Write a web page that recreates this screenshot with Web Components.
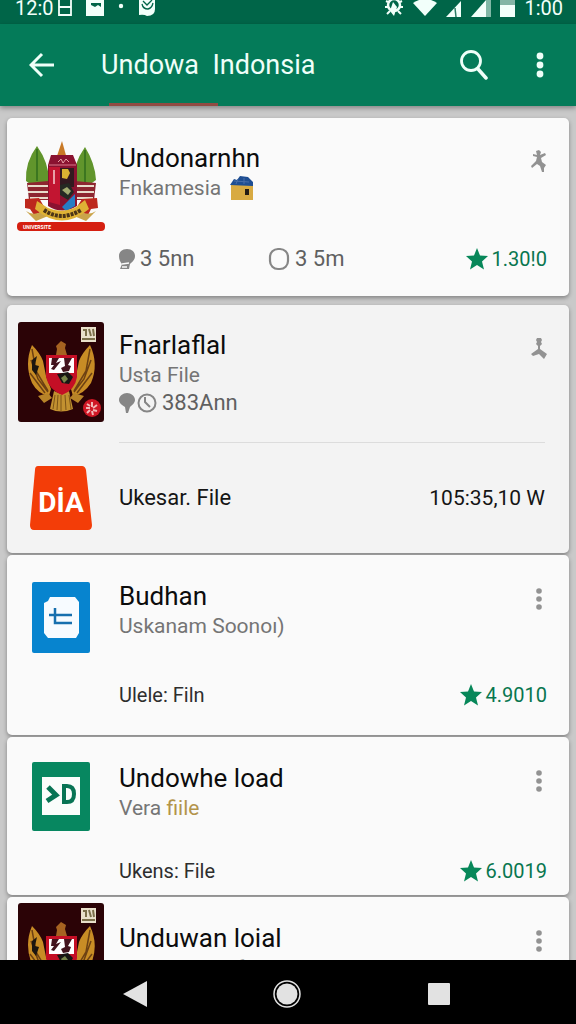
<!DOCTYPE html>
<html lang="id">
<head>
<meta charset="utf-8">
<meta name="viewport" content="width=device-width, initial-scale=1">
<title>Undowa Indonsia</title>
<style>
  body {
    margin: 0;
    height: 100vh;
    display: flex;
    flex-direction: column;
    overflow: hidden;
    font-family: Roboto, "Noto Sans CJK JP", sans-serif;
    background: #c9c9c9;
  }
</style>
</head>
<body>
<status-bar></status-bar>
<app-bar>Undowa&nbsp; Indonsia</app-bar>

<card-list>
  <file-card style="--media-top: 17px; --footer-gap: 43px; --end: 23px; margin-bottom: 7px">
    <app-logo slot="media" name="castle"></app-logo>
    <span slot="title">Undonarnhn</span>
    <span slot="subtitle">Fnkamesia</span>
    <app-icon slot="subtitle" name="house"></app-icon>
    <app-icon slot="action" name="runner"></app-icon>
    <stat-item slot="footer" icon="bulb">3 5nn</stat-item>
    <stat-item slot="footer" icon="ring">3 5m</stat-item>
    <rating-score slot="footer">1.30!0</rating-score>
  </file-card>

  <file-card style="--card-bg: #f3f3f3; --media-top: 17px; --footer-gap: 0px; --end: 0px">
    <app-logo slot="media" name="eagle"></app-logo>
    <span slot="title">Fnarlaflal</span>
    <span slot="subtitle">Usta File</span>
    <app-icon slot="action" name="tripod"></app-icon>
    <stat-item slot="footer" icon="pin" second="clock">383Ann</stat-item>
    <file-row slot="extra">
      <app-logo slot="media" name="dia"></app-logo>
      Ukesar. File
      <span slot="value">105:35,10 W</span>
    </file-row>
  </file-card>

  <file-card style="--top: 25px; --media-top: 27px; --footer-gap: 41px; --end: 26px">
    <app-logo slot="media" name="doc"></app-logo>
    <span slot="title">Budhan</span>
    <span slot="subtitle">Uskanam Soonoı)</span>
    <app-icon slot="action" name="dots"></app-icon>
    <span slot="footer">Ulele: Filn</span>
    <rating-score slot="footer">4.9010</rating-score>
  </file-card>

  <file-card style="--top: 25px; --media-top: 25px; --footer-gap: 35px; --end: 10px">
    <app-logo slot="media" name="code"></app-logo>
    <span slot="title">Undowhe load</span>
    <span slot="subtitle">Vera <span style="color: #b3944a">fiile</span></span>
    <app-icon slot="action" name="dots"></app-icon>
    <span slot="footer">Ukens: File</span>
    <rating-score slot="footer">6.0019</rating-score>
  </file-card>

  <file-card style="--top: 25px; --media-top: 6px; --footer-gap: 41px; --end: 26px">
    <app-logo slot="media" name="eagle"></app-logo>
    <span slot="title">Unduwan loial</span>
    <span slot="subtitle">Ukanduom af</span>
    <app-icon slot="action" name="dots"></app-icon>
  </file-card>
</card-list>

<nav-bar></nav-bar>

<script>
const ICONS = {
  back: [26, 26, '<path d="M25 13H3M13 2 2 13l11 11" fill="none" stroke="currentColor" stroke-width="3"/>'],
  search: [28, 30, '<circle cx="11" cy="11" r="9.500" fill="none" stroke="currentColor" stroke-width="2.800"/><path d="m18 19 8 9" stroke="currentColor" stroke-width="3.500" stroke-linecap="round"/>'],
  more: [8, 26, '<circle cx="4" cy="4" r="3.400"/><circle cx="4" cy="13" r="3.400"/><circle cx="4" cy="22" r="3.400"/>'],
  dots: [16, 22, '<circle cx="8" cy="3" r="2.800"/><circle cx="8" cy="11" r="2.800"/><circle cx="8" cy="19" r="2.800"/>'],
  runner: [16, 24, '<path d="m5 2 3-1 2 2-1 3 5-2 1 2-5 3 1 4 4 3-2 3 0 4h-2l-2-6-3-2-5 4-1-2 5-5 1-4-4-1V5l4 1z"/>'],
  tripod: [16, 22, '<path d="M6 1h4l1 2-1 2 1 2-2 2v3l7 5-3 5-5-5-6 2-2-2 7-5V9L5 7l1-2-1-2z"/>'],
  house: [24, 28, '<path d="M1 11h22v15H1z" fill="#d8aa42"/><path d="m0 11 4-6 3 1 3-4 8 1 5 5v4z" fill="#1e4e93"/><path d="m4 7 15 1M8 5l-2 5m8-6v6" stroke="#476da9"/><path d="M15 15h4v6h-4z" fill="#241c14"/>'],
  bulb: [16, 22, '<path d="M8 1c5 0 8 3 8 7s-3 6-5 8l-1 5H1l2-5C1 14 0 11 0 8c0-4 3-7 8-7z"/><path d="m3 16 7-1M3 19h5" stroke="#fafafa" stroke-width="1.500"/>'],
  ring: [22, 24, '<rect x="2" y="2" width="18" height="20" rx="8" fill="none" stroke="currentColor" stroke-width="2.200"/>'],
  pin: [16, 22, '<path d="M8 1c4 0 8 3 8 7 0 3-3 5-5 7l-2 6H7l-1-6C3 13 0 11 0 8c0-4 4-7 8-7z"/>'],
  clock: [20, 22, '<circle cx="10" cy="11" r="8.500" fill="none" stroke="currentColor" stroke-width="2"/><path d="M8 5v5l5 5" fill="none" stroke="currentColor" stroke-width="2"/>'],
  star: [22, 22, '<path d="m11 0 3 7.500 8 .5-6 5.500 2 8-7-4.500-7 4.500 2-8L0 8l8-.5z"/>'],
  grid: [14, 16, '<path d="M1 0v15h12V0M1 7h12" fill="none" stroke="currentColor" stroke-width="1.800"/>'],
  picture: [18, 16, '<path d="M0 0h18v16H0z"/><path d="M5 3h10v4l-3-2-3 2-4-2z" fill="#006548"/>'],
  dot: [6, 16, '<circle cx="3" cy="6" r="2.200"/>'],
  badge: [18, 16, '<path d="M1 0h16v9q0 7-8 7-3-2-8-1z"/><path d="m5 1 4 4 5-5M4 4q1 5 6 5 4-1 5-6" fill="none" stroke="#006548" stroke-width="1.300"/>'],
  gear: [20, 18, '<circle cx="10" cy="5" r="6" fill="none" stroke="currentColor" stroke-width="2.500"/><path d="m2 1 2 1M1 7h3m12-5 2-1m-2 6h3M3 14l3-3m8 0 3 3" stroke="currentColor" stroke-width="2"/><path d="m9 2 4 5-3 9-4-5z"/>'],
  wifi: [24, 16, '<path d="M0 3Q12-5 24 3L12 16z"/>'],
  signal: [16, 18, '<path d="M0 17 15 1v16z"/><path d="m9 8 1 9" stroke="#2a7c64" stroke-width="1.500"/>'],
  signal2: [20, 18, '<path d="M15 0h5v17h-5z" fill="#80b8a6"/><path d="M0 17 15 0v17z"/>'],
  battery: [15, 18, '<path d="M0 0h15v5H0z" fill="#83b5a5"/><path d="M0 5h15v12H0z"/>'],
  navBack: [26, 28, '<path d="M25 1v26L1 14z"/>'],
  navHome: [28, 28, '<circle cx="14" cy="14" r="13" fill="none" stroke="currentColor" stroke-width="1.500"/><circle cx="14" cy="14" r="10.500"/>'],
  navRecent: [22, 22, '<rect width="22" height="22" rx="1"/>']
};

const LOGOS = {
  castle: [90, 98, `
    <path d="M21 11q-12 16-11 35l11 8 12-8Q33 28 21 11zM69 12Q57 29 58 46l11 7 11-8Q79 28 69 12z" fill="#61952c"/>
    <path d="M21 14v32M69 15v32" stroke="#3c7620" stroke-width="2"/>
    <path d="m46 6 5 18H40z" fill="#c97a27"/>
    <path d="m11 48 21-2h27l21 2-2 17H13z" fill="#8e2630"/>
    <path d="M12 51h66M12 57h66M14 63h63" stroke="#e8dccb" stroke-width="2"/>
    <path d="M35 20h22l4 10v41q-15 9-29 0V30z" fill="#8a1230"/>
    <path d="M33 30h27" stroke="#d9798a" stroke-width="1"/><path d="M33 32h11v38l-11-3z" fill="#c21531"/>
    <path d="M38 35v14" stroke="#e8a0a8" stroke-width="2"/>
    <path d="M44 33h14v19H44z" fill="#321920"/><path d="M46 34h6l2 4-3 6-5-1z" fill="#d9b232"/>
    <path d="m44 50 9-2 5 9-6 8-8-5z" fill="#252923"/><path d="m46 55 5-3 4 4-3 4z" fill="#a1aa70"/>
    <path d="m46 72 13-13v12l-9 5z" fill="#267dc5"/><path d="m42 27 3-3 2 4 3-4 3 3" stroke="#e6a1a5" fill="none"/>
    <path d="m9 64 14-1 7 12-12 5-4-6-5-1zM81 63l-15 1-7 11 13 5 3-6 7-1z" fill="#bd281d"/>
    <path d="M10 76q7 5 15 1l7 4-12 5zM80 76q-7 5-15 1l-7 4 12 5z" fill="#caa44a"/>
    <path d="m21 66 11 7q14 6 28-1l9-7 4 9q-27 23-54 0z" fill="#dfb235"/>
    <path d="M28 75q17 12 37 0" fill="none" stroke="#4b3517" stroke-width="4" stroke-dasharray="3 1"/>
    <rect x="1" y="87" width="88" height="9" rx="4" fill="#d51f10"/>
    <text x="7" y="94" font-size="5" font-weight="700" fill="#fff">UNIVERSITE</text>`],
  eagle: [86, 100, `
    <rect width="86" height="100" rx="3" fill="#2b0306"/>
    <path d="M14 23q-8 19 0 38 6 11 17 13l2-7-5-13-3-15q-3-8-11-16zM72 23q9 19 1 38-7 11-18 13l-2-7 5-13 3-15q3-8 11-16z" fill="#c88c25"/>
    <path d="m14 27 4 22 12 20M13 38l7 19 10 13M12 51l15 20M72 27l-4 22-12 20m17-31-7 19-10 13m18-19L59 71" fill="none" stroke="#6d4113" stroke-width="1.500"/>
    <path d="m14 38 5-4-2 9 4 1-3 9-4-5z" fill="#1c1610"/>
    <path d="m38 24 5-5 5 3-1 4 2 7H38l1-6z" fill="#a66321"/>
    <path d="m36 69 7 3 8-3 4 18q-12 5-23 0z" fill="#c29130"/>
    <path d="m37 73-2 14m5-14-1 15m4-15v16m4-16 1 15m3-15 2 14" stroke="#7c5417"/>
    <path d="m20 74 10-3 4 5-8 5zM66 74l-10-3-4 5 8 5z" fill="#b78328"/>
    <path d="M28 33h31v22q-2 13-15 18-13-5-16-18z" fill="#c40f25"/>
    <path d="M31 36h25v15H31z" fill="#fff"/>
    <path d="M34 36h7l-3 5 5-2-7 9-3-1 3-4h-3zm12 0h8l-4 7 3 1-2 5-6 1-2-4 4-2z" fill="#43131d"/>
    <path d="m39 52 11-2 5 5-4 7-7-1z" fill="#171614"/><path d="m43 56 4-3 3 4-4 4z" fill="#77854a"/>
    <path d="M63 5h15v15H63z" fill="#e9e0ca"/><path d="M65 8h3v6m3-7 2 7m2-7 1 7M64 17h13" fill="none" stroke="#7c704b" stroke-width="2"/>
    <circle cx="74" cy="86" r="9" fill="#d01826"/>
    <path d="m69 82 3 2m2-4v5m5-2-4 3m4 3-4-1m0 5-1-4m-5 2 3-3m-4-2h4" fill="none" stroke="#f2b8b7" stroke-width="2"/>`],
  dia: [62, 64, `
    <path d="M8 0h44q3 0 4 4l6 55q0 5-4 5H4q-4 0-4-5L5 4q0-4 3-4z" fill="#f33d08"/>
    <text x="31" y="46" text-anchor="middle" font-size="28" font-weight="700" fill="#fff">DİA</text>`],
  doc: [58, 71, `
    <rect width="58" height="71" rx="2" fill="#0784cf"/>
    <path d="M18 15h25l4 5v31l-3 5H16l-4-5V21l4-2z" fill="#f7fbff"/>
    <path d="M17 33h23M23 26v15h17" fill="none" stroke="#176fae" stroke-width="2.500"/>`],
  code: [58, 69, `
    <rect width="58" height="69" rx="2" fill="#078760"/>
    <path d="M10 15h38v38H10z" fill="#fafdfb"/>
    <path d="m16 25 8 8-9 6" fill="none" stroke="#087454" stroke-width="5"/>
    <path d="M32 24h3q7 0 7 8t-7 8h-3z" fill="none" stroke="#087454" stroke-width="4"/>`]
};

const drawing = (set, name) => {
  const [w, h, body] = set[name];
  return `<svg width="${w}" height="${h}" viewBox="0 0 ${w} ${h}" fill="currentColor" aria-hidden="true">${body}</svg>`;
};

class AppIcon extends HTMLElement {
  connectedCallback() {
    this.attachShadow({ mode: 'open' });
    this.shadowRoot.innerHTML = `
      <style>
        :host { display: inline-flex; flex: none; }
        svg { display: block; }
      </style>
      ${drawing(ICONS, this.getAttribute('name'))}
    `;
  }
}

class AppLogo extends HTMLElement {
  connectedCallback() {
    this.attachShadow({ mode: 'open' });
    this.shadowRoot.innerHTML = `
      <style>
        :host { display: block; flex: none; }
        svg { display: block; }
      </style>
      ${drawing(LOGOS, this.getAttribute('name'))}
    `;
  }
}

class StatusBar extends HTMLElement {
  connectedCallback() {
    this.attachShadow({ mode: 'open' });
    this.shadowRoot.innerHTML = `
      <style>
        :host {
          display: flex;
          flex: none;
          justify-content: space-between;
          height: 24px;
          padding: 0 13px 0 15px;
          box-sizing: border-box;
          background: #006548;
          color: #f2fffa;
          font-size: 20px;
          line-height: 16px;
        }
        div { display: flex; align-items: flex-start; }
        .left { gap: 14px; }
        .right { gap: 9px; }
        .time { display: flex; gap: 4px; }
      </style>
      <div class="left">
        <span class="time">12:0<app-icon name="grid"></app-icon></span>
        <app-icon name="picture"></app-icon>
        <app-icon name="dot"></app-icon>
        <app-icon name="badge"></app-icon>
      </div>
      <div class="right">
        <app-icon name="gear"></app-icon>
        <app-icon name="wifi"></app-icon>
        <app-icon name="signal"></app-icon>
        <app-icon name="signal2"></app-icon>
        <app-icon name="battery"></app-icon>
        <span>1:00</span>
      </div>
    `;
  }
}

class AppBar extends HTMLElement {
  connectedCallback() {
    this.attachShadow({ mode: 'open' });
    this.shadowRoot.innerHTML = `
      <style>
        :host {
          display: block;
          flex: none;
          position: relative;
          z-index: 1;
          background: #047b59;
          color: #effff9;
          box-shadow: 0 2px 5px rgba(0, 0, 0, 0.35);
        }
        .bar {
          display: flex;
          align-items: center;
          height: 79px;
          padding: 2px 32px 0 29px;
          box-sizing: border-box;
        }
        h1 {
          flex: 1;
          margin: 0 0 0 46px;
          font-size: 27px;
          line-height: 36px;
          font-weight: 400;
          white-space: nowrap;
        }
        button {
          display: flex;
          padding: 0;
          border: 0;
          background: none;
          color: inherit;
          cursor: pointer;
        }
        .search { margin-right: 48px; }
        .indicator {
          width: 109px;
          height: 3px;
          margin-left: 109px;
          background: #914b43;
        }
      </style>
      <div class="bar">
        <button aria-label="Back"><app-icon name="back"></app-icon></button>
        <h1><slot></slot></h1>
        <button class="search" aria-label="Search"><app-icon name="search"></app-icon></button>
        <button aria-label="More options"><app-icon name="more"></app-icon></button>
      </div>
      <div class="indicator"></div>
    `;
  }
}

class CardList extends HTMLElement {
  connectedCallback() {
    this.attachShadow({ mode: 'open' });
    this.shadowRoot.innerHTML = `
      <style>
        :host {
          display: flex;
          flex-direction: column;
          flex: 1;
          gap: 2px;
          min-height: 0;
          padding: 12px 7px 0;
          overflow: hidden;
          background: #c9c9c9;
        }
      </style>
      <slot></slot>
    `;
  }
}

class FileCard extends HTMLElement {
  connectedCallback() {
    this.attachShadow({ mode: 'open' });
    this.shadowRoot.innerHTML = `
      <style>
        :host {
          display: block;
          flex: none;
          border-radius: 5px;
          background: var(--card-bg, #fafafa);
          box-shadow: 0 2px 4px rgba(0, 0, 0, 0.35);
        }
        .main { display: flex; }
        .media {
          display: flex;
          flex: none;
          justify-content: center;
          width: 108px;
          height: 0;
          padding-top: var(--media-top);
        }
        .body {
          flex: 1;
          min-width: 0;
          padding: var(--top, 24px) 22px var(--end) 4px;
        }
        .head { display: flex; justify-content: space-between; }
        h2 {
          margin: 0;
          color: #0c0c0c;
          font-size: 26px;
          line-height: 32px;
          font-weight: 400;
        }
        .subtitle {
          display: flex;
          gap: 9px;
          color: #757575;
          font-size: 21px;
          line-height: 28px;
        }
        button {
          display: flex;
          align-items: center;
          height: 38px;
          padding: 0;
          border: 0;
          background: none;
          color: #929292;
          cursor: pointer;
        }
        .footer {
          display: flex;
          align-items: center;
          min-height: 28px;
          margin-top: var(--footer-gap);
          color: #2e2e2e;
          font-size: 20px;
          line-height: 28px;
        }
        ::slotted(rating-score) { margin-left: auto; }
        ::slotted(stat-item) { min-width: 149px; }
      </style>
      <div class="main">
        <div class="media"><slot name="media"></slot></div>
        <div class="body">
          <div class="head">
            <div>
              <h2><slot name="title"></slot></h2>
              <div class="subtitle"><slot name="subtitle"></slot></div>
            </div>
            <button aria-label="Options"><slot name="action"></slot></button>
          </div>
          <div class="footer"><slot name="footer"></slot></div>
        </div>
      </div>
      <slot name="extra"></slot>
    `;
  }
}

class FileRow extends HTMLElement {
  connectedCallback() {
    this.attachShadow({ mode: 'open' });
    this.shadowRoot.innerHTML = `
      <style>
        :host { display: flex; padding-top: 25px; }
        .media {
          display: flex;
          flex: none;
          align-items: center;
          justify-content: center;
          width: 108px;
        }
        .line {
          display: flex;
          flex: 1;
          align-items: center;
          justify-content: space-between;
          height: 110px;
          margin: 0 24px 0 4px;
          border-top: 1px solid #dcdcdc;
          color: #151515;
          font-size: 22px;
          line-height: 28px;
        }
        ::slotted([slot="value"]) { font-size: 21px; }
      </style>
      <div class="media"><slot name="media"></slot></div>
      <div class="line"><span><slot></slot></span><slot name="value"></slot></div>
    `;
  }
}

class StatItem extends HTMLElement {
  connectedCallback() {
    const second = this.getAttribute('second');
    this.attachShadow({ mode: 'open' });
    this.shadowRoot.innerHTML = `
      <style>
        :host { display: flex; align-items: center; gap: 5px; color: #606060; font-size: 22px; }
        app-icon { color: #868686; }
        .pair { display: flex; align-items: center; gap: 2px; }
      </style>
      <span class="pair">
        <app-icon name="${this.getAttribute('icon')}"></app-icon>
        ${second ? `<app-icon name="${second}"></app-icon>` : ''}
      </span>
      <span><slot></slot></span>
    `;
  }
}

class RatingScore extends HTMLElement {
  connectedCallback() {
    this.attachShadow({ mode: 'open' });
    this.shadowRoot.innerHTML = `
      <style>
        :host { display: flex; align-items: center; gap: 4px; color: #08764f; }
        app-icon { color: #078759; }
      </style>
      <app-icon name="star"></app-icon><span><slot></slot></span>
    `;
  }
}

class NavBar extends HTMLElement {
  connectedCallback() {
    this.attachShadow({ mode: 'open' });
    this.shadowRoot.innerHTML = `
      <style>
        :host {
          display: flex;
          flex: none;
          position: relative;
          z-index: 1;
          align-items: center;
          justify-content: center;
          height: 64px;
          padding: 3px 2px 0 0;
          box-sizing: border-box;
          background: #000;
        }
        button {
          display: flex;
          justify-content: center;
          width: 152px;
          padding: 0;
          border: 0;
          background: none;
          color: #e2e2e2;
          cursor: pointer;
        }
      </style>
      <button aria-label="Back"><app-icon name="navBack"></app-icon></button>
      <button aria-label="Home"><app-icon name="navHome"></app-icon></button>
      <button aria-label="Recent apps"><app-icon name="navRecent"></app-icon></button>
    `;
  }
}

customElements.define('app-icon', AppIcon);
customElements.define('app-logo', AppLogo);
customElements.define('status-bar', StatusBar);
customElements.define('app-bar', AppBar);
customElements.define('card-list', CardList);
customElements.define('file-card', FileCard);
customElements.define('file-row', FileRow);
customElements.define('stat-item', StatItem);
customElements.define('rating-score', RatingScore);
customElements.define('nav-bar', NavBar);
</script>
</body>
</html>
